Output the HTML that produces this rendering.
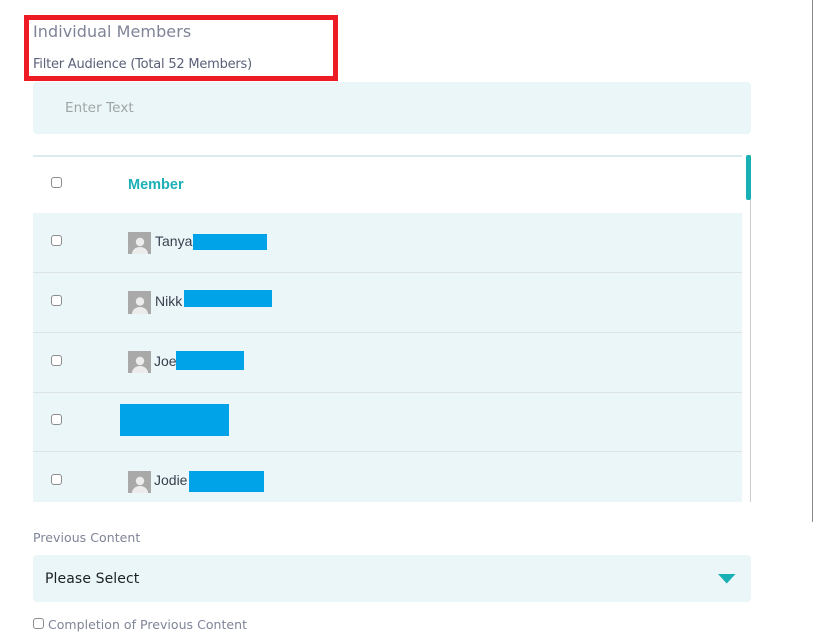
<!DOCTYPE html>
<html lang="en">
<head>
<meta charset="utf-8">
<title>Individual Members</title>
<style>
html,body{margin:0;padding:0;width:813px;height:631px;background:#fff;overflow:hidden;font-family:"Liberation Sans",sans-serif}
.a{position:absolute}
.t{position:absolute;white-space:nowrap;line-height:1;font-family:"DejaVu Sans",sans-serif}
.cb{position:absolute;left:51px;width:9px;height:9px;border:1.5px solid #8c8c8c;border-radius:3px;background:#fff}
.sep{position:absolute;left:33px;width:709px;height:1px;background:#dde3e5}
.av{position:absolute;left:128px;width:23px;height:22px;background:#a9a9a9;overflow:hidden}
.blue{position:absolute;background:#00a3e8}
.name{position:absolute;left:154px;font-size:14px;line-height:1;color:#3a3f4f;white-space:nowrap}
</style>
</head>
<body>
<div class="a" style="left:812px;top:0;width:1px;height:522px;background:#8a8a8a"></div>
<div class="a" style="left:24px;top:15px;width:304px;height:56px;border:5px solid #ed1c24"></div>
<div class="t" style="left:33px;top:24px;font-size:16px;letter-spacing:.06px;color:#7f8497">Individual Members</div>
<div class="t" style="left:33px;top:58px;font-size:13px;letter-spacing:-.22px;color:#5a6078">Filter Audience (Total 52 Members)</div>

<div class="a" style="left:33px;top:82px;width:718px;height:52px;background:#eaf6f7;border-radius:4px"></div>
<div class="t" style="left:65px;top:102px;font-size:13.5px;letter-spacing:.1px;color:#a0a5a6">Enter Text</div>

<div class="a" style="left:33px;top:155px;width:709px;height:2px;background:#dcebed"></div>
<div class="cb" style="top:177px"></div>
<div class="t" style="left:128px;top:178px;font-size:14.5px;font-weight:700;font-family:'Liberation Sans',sans-serif;color:#1bb0b5">Member</div>

<div class="a" style="left:33px;top:213px;width:709px;height:289px;background:#eaf6f7"></div>
<div class="sep" style="top:272px"></div>
<div class="sep" style="top:332px"></div>
<div class="sep" style="top:392px"></div>
<div class="sep" style="top:451px"></div>

<div class="a" style="left:750px;top:155px;width:1px;height:347px;background:#cccccc"></div>
<div class="a" style="left:746px;top:155px;width:5px;height:45px;background:#17b0b5;border-radius:2px"></div>

<div class="cb" style="top:235px"></div>
<div class="cb" style="top:295px"></div>
<div class="cb" style="top:355px"></div>
<div class="cb" style="top:414px"></div>
<div class="cb" style="top:474px"></div>

<div class="av" style="top:232px"><svg width="23" height="22"><circle cx="12" cy="10" r="4.2" fill="#ececec"/><ellipse cx="12" cy="22" rx="8" ry="7" fill="#ececec"/></svg></div>
<div class="av" style="top:291px;height:23px"><svg width="23" height="23"><circle cx="12" cy="10.5" r="4.2" fill="#ececec"/><ellipse cx="12" cy="23" rx="8" ry="7" fill="#ececec"/></svg></div>
<div class="av" style="top:351px"><svg width="23" height="22"><circle cx="12" cy="10" r="4.2" fill="#ececec"/><ellipse cx="12" cy="22" rx="8" ry="7" fill="#ececec"/></svg></div>
<div class="av" style="top:471px"><svg width="23" height="22"><circle cx="12" cy="10" r="4.2" fill="#ececec"/><ellipse cx="12" cy="22" rx="8" ry="7" fill="#ececec"/></svg></div>

<div class="name" style="top:234px;left:155px">Tanya</div>
<div class="name" style="top:294px;left:155px">Nikk</div>
<div class="name" style="top:354px">Joe</div>
<div class="name" style="top:473px">Jodie</div>

<div class="blue" style="left:193px;top:234px;width:74px;height:16px"></div>
<div class="blue" style="left:184px;top:290px;width:88px;height:17px"></div>
<div class="blue" style="left:176px;top:351px;width:68px;height:19px"></div>
<div class="blue" style="left:120px;top:404px;width:109px;height:32px"></div>
<div class="blue" style="left:189px;top:471px;width:75px;height:21px"></div>

<div class="t" style="left:33px;top:532px;font-size:12.5px;letter-spacing:.05px;color:#7f8497">Previous Content</div>
<div class="a" style="left:33px;top:555px;width:718px;height:47px;background:#eaf6f7;border-radius:4px"></div>
<div class="t" style="left:45px;top:572px;font-size:14px;letter-spacing:.1px;color:#1d2026">Please Select</div>
<svg class="a" style="left:717px;top:573px" width="20" height="12"><polygon points="1,1 18.5,1 9.75,10.5" fill="#17b0b5"/></svg>

<div class="cb" style="left:33px;top:618px"></div>
<div class="t" style="left:48px;top:619px;font-size:12.5px;letter-spacing:.03px;color:#7f8497">Completion of Previous Content</div>
</body>
</html>
